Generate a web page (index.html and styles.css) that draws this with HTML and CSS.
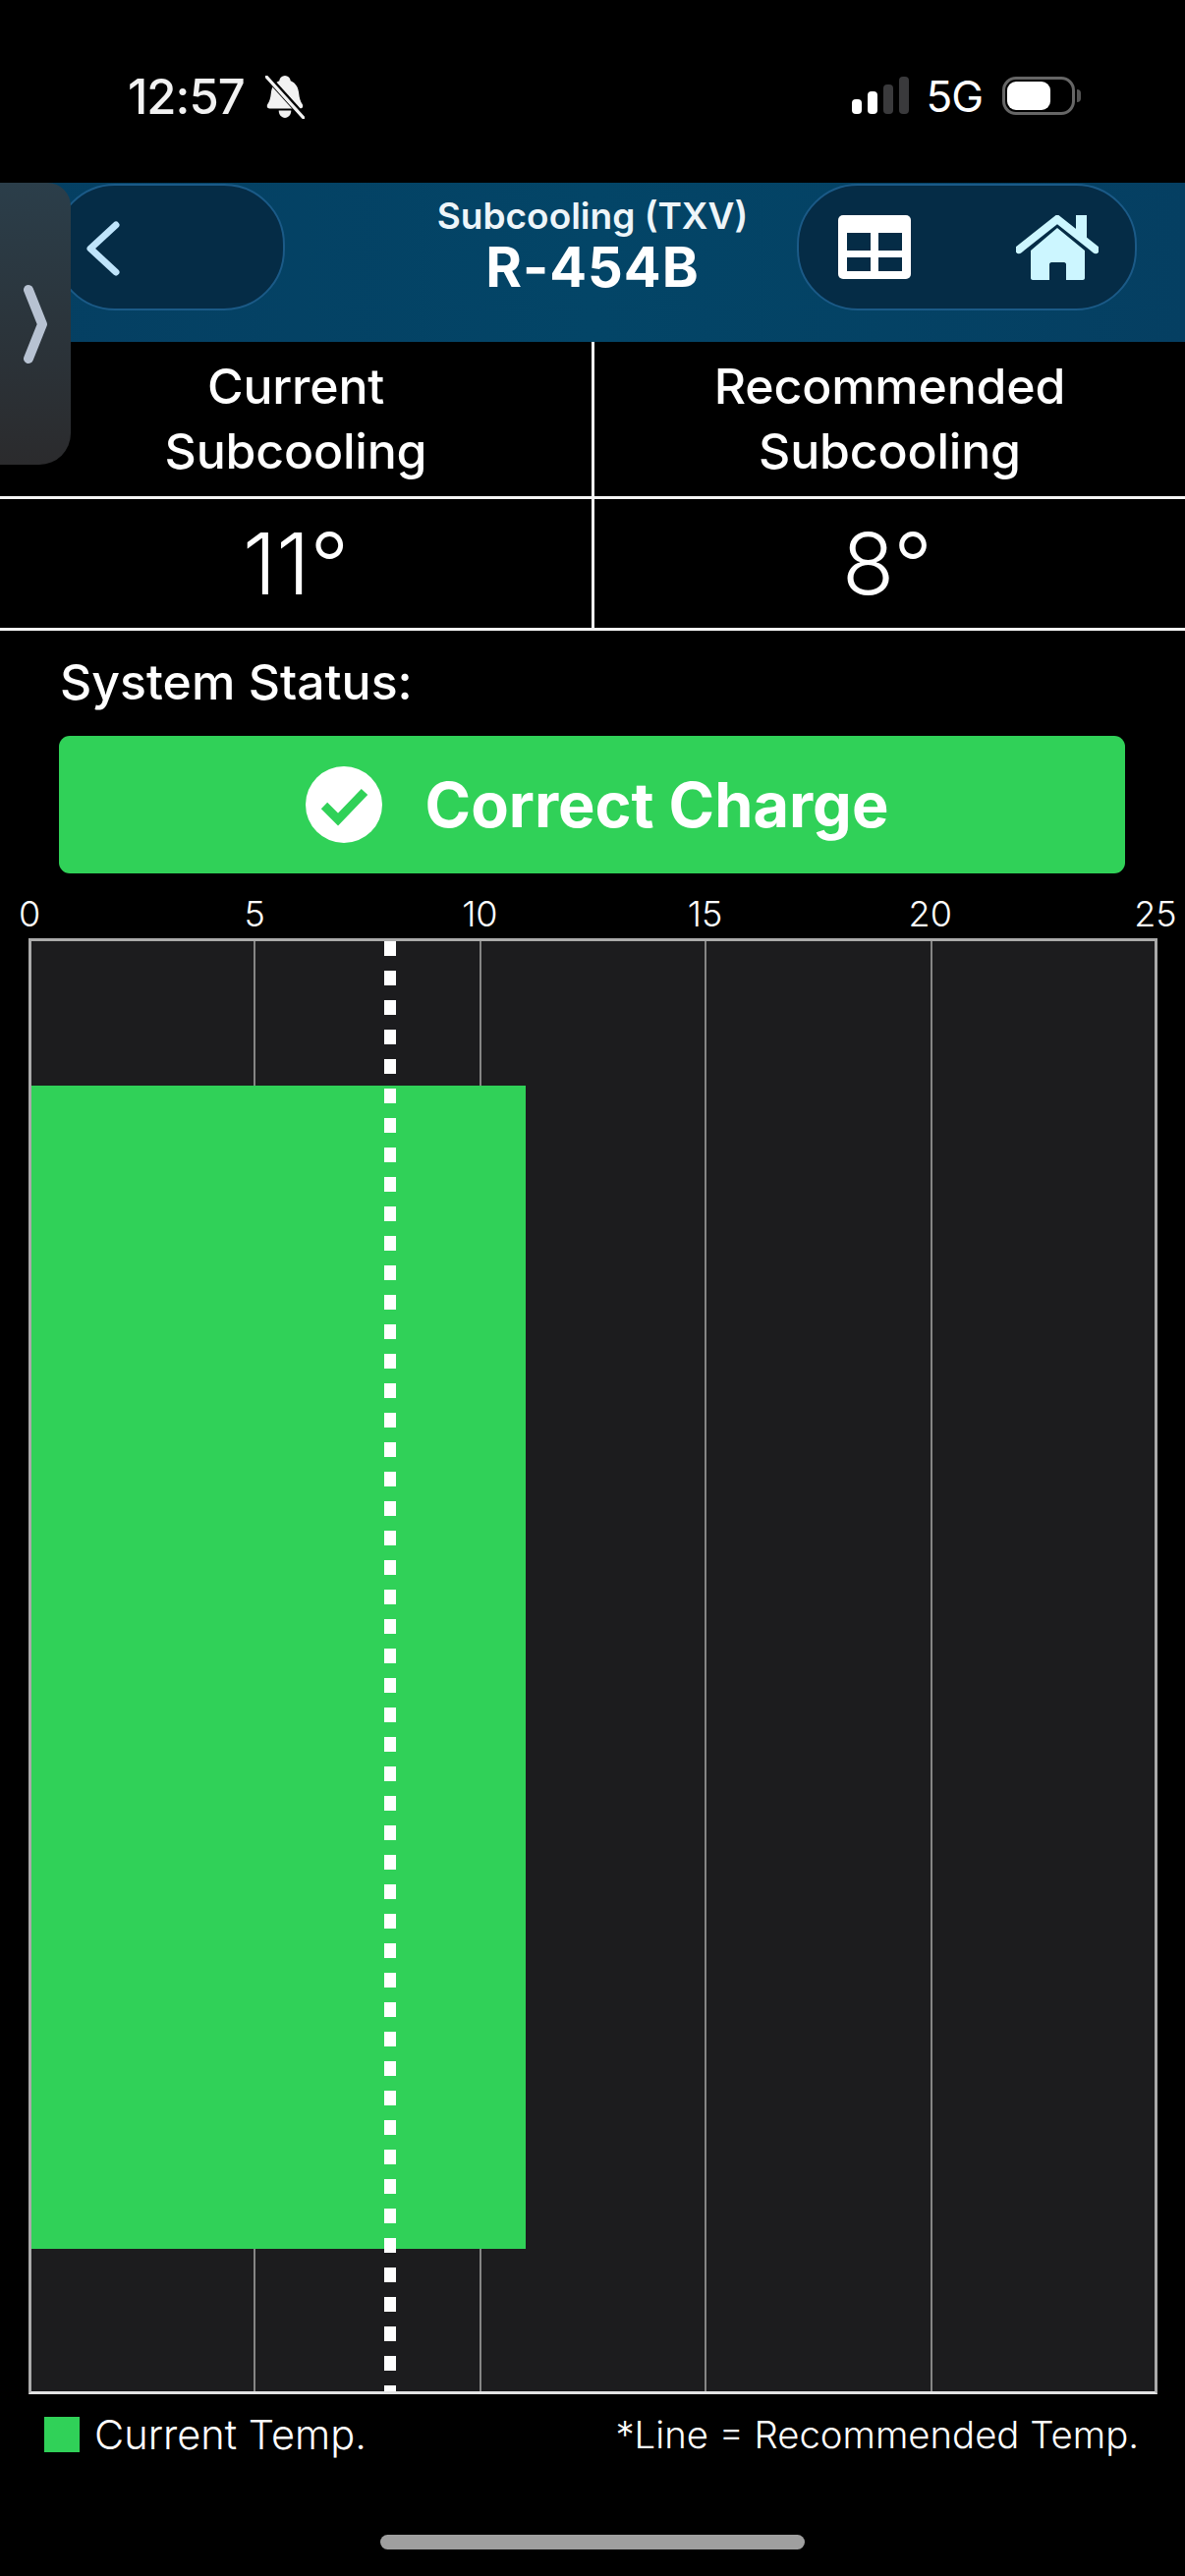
FILE: index.html
```html
<!DOCTYPE html>
<html>
<head>
    <title>Subcooling (TXV)</title>
    <meta name="viewport" content="width=device-width, initial-scale=1.0">
    <link rel="stylesheet" href="styles.css">
</head>
<body>
    <div class="status-bar">
        <div class="status-left">
            <span class="clock">12:57</span>
            <svg class="bell" width="40" height="44" viewBox="0 0 38 42">
                <path d="M19 0c3 0 5 2 5.500 5 5 2 7.500 6.500 8 12 .5 5 1.500 8 3.500 11 1 2 0 4-2 4H4c-2 0-3-2-2-4 2-3 3-6 3.500-11 .5-5.500 3-10 8-12C14 2 16 0 19 0z" fill="#f2f2f2"/>
                <path d="M13 34h12c0 4-2.500 7-6 7s-6-3-6-7z" fill="#f2f2f2"/>
                <path d="M1 0l37 41" stroke="#000" stroke-width="6"/>
                <path d="M1 1l36 40" stroke="#f2f2f2" stroke-width="3" stroke-linecap="round"/>
            </svg>
        </div>
        <div class="status-right">
            <div class="signal">
                <i class="sig s1"></i>
                <i class="sig s2"></i>
                <i class="sig s3 off"></i>
                <i class="sig s4 off"></i>
            </div>
            <span class="network">5G</span>
            <div class="battery"><div class="battery-level"></div></div>
            <div class="battery-cap"></div>
        </div>
    </div>

    <div class="header">
        <div class="pill pill-back">
            <svg width="34" height="56" viewBox="0 0 34 56">
                <path d="M30 4L4 28l26 24" fill="none" stroke="#bfe4fb" stroke-width="7" stroke-linecap="round" stroke-linejoin="round"/>
            </svg>
        </div>
        <div class="title">
            <div class="title-sub">Subcooling (TXV)</div>
            <div class="title-main">R-454B</div>
        </div>
        <div class="pill pill-actions">
            <svg width="74" height="65" viewBox="0 0 74 65">
                <rect width="74" height="65" rx="5" fill="#fff"/>
                <rect x="9" y="18" width="24" height="18" fill="#052c46"/>
                <rect x="41" y="18" width="24" height="18" fill="#052c46"/>
                <rect x="9" y="43" width="24" height="14" fill="#052c46"/>
                <rect x="41" y="43" width="24" height="14" fill="#052c46"/>
            </svg>
            <svg width="84" height="66" viewBox="0 0 84 66">
                <path d="M61 0h11v24H61z" fill="#ccf6ff"/>
                <path d="M3 35L42 4l39 31" fill="none" stroke="#ccf6ff" stroke-width="8" stroke-linecap="round"/>
                <path d="M42 13l28 23v28c0 1-1 2-2 2H51V50c0-1-1-2-2-2H36c-1 0-2 1-2 2v16H17c-1 0-2-1-2-2V36z" fill="#ccf6ff"/>
            </svg>
        </div>
        <div class="side-tab">
            <svg width="26" height="82" viewBox="0 0 26 82">
                <path d="M6 6l14 35L6 76" fill="none" stroke="#b7c2d2" stroke-width="10" stroke-linecap="round" stroke-linejoin="round"/>
            </svg>
        </div>
    </div>

    <div class="readings">
        <div class="cell cell-label divider">Current<br>Subcooling</div>
        <div class="cell cell-label">Recommended<br>Subcooling</div>
        <div class="cell cell-value divider">11°</div>
        <div class="cell cell-value value-right">8°</div>
    </div>

    <div class="status-label">System Status:</div>
    <div class="status-card">
        <svg width="78" height="78" viewBox="0 0 78 78">
            <circle cx="39" cy="39" r="39" fill="#fff"/>
            <path d="M19 40l14 14 27-28" fill="none" stroke="#30d158" stroke-width="9"/>
        </svg>
        <span>Correct Charge</span>
    </div>

    <div class="axis">
        <span class="tick"><b>0</b></span>
        <span class="tick"><b>5</b></span>
        <span class="tick"><b>10</b></span>
        <span class="tick"><b>15</b></span>
        <span class="tick"><b>20</b></span>
        <span class="tick"><b>25</b></span>
    </div>
    <div class="chart">
        <div class="gridline"></div>
        <div class="gridline"></div>
        <div class="gridline"></div>
        <div class="gridline"></div>
        <div class="gridline"></div>
        <div class="bar" style="width: 44%"></div>
        <div class="target-line" style="left: 32%"></div>
    </div>

    <div class="legend">
        <div class="legend-item"><span class="swatch"></span>Current Temp.</div>
        <div class="legend-note">*Line = Recommended Temp.</div>
    </div>

    <div class="home-indicator"></div>
</body>
</html>
```

FILE: styles.css
```css
* {
    box-sizing: border-box;
}
body {
    margin: 0;
    width: 1206px;
    height: 2622px;
    overflow: hidden;
    background: #000;
    color: #fff;
    font-family: Inter, "Noto Sans", sans-serif;
}

/* status bar */
.status-bar {
    height: 186px;
    display: flex;
    justify-content: space-between;
    align-items: flex-start;
    padding: 0 106px 0 130px;
}
.status-left {
    display: flex;
    align-items: flex-start;
    gap: 21px;
    padding-top: 69px;
}
.clock {
    font-size: 49px;
    line-height: 60px;
    font-weight: 500;
    color: #f2f2f2;
    letter-spacing: -1px;
}
.bell {
    margin-top: 8px;
}
.status-right {
    display: flex;
    align-items: flex-start;
    padding-top: 78px;
}
.signal {
    display: flex;
    align-items: flex-end;
    gap: 6px;
    height: 38px;
}
.sig {
    width: 10px;
    border-radius: 4px;
    background: #fff;
}
.sig.off {
    background: #3a3a3c;
}
.s1 { height: 15px; }
.s2 { height: 23px; }
.s3 { height: 30px; }
.s4 { height: 38px; }
.network {
    margin-left: 17px;
    font-size: 44px;
    line-height: 42px;
    margin-top: -1px;
    letter-spacing: -1px;
}
.battery {
    margin-left: 20px;
    width: 74px;
    height: 39px;
    border: 3px solid #666;
    border-radius: 14px;
    padding: 2px;
}
.battery-level {
    width: 44px;
    height: 29px;
    border-radius: 9px;
    background: #fff;
}
.battery-cap {
    width: 4px;
    height: 13px;
    margin: 13px 0 0 2px;
    background: #555;
    border-radius: 0 4px 4px 0;
}

/* blue nav header */
.header {
    position: relative;
    height: 162px;
    display: grid;
    grid-template-columns: 1fr auto 1fr;
    align-items: start;
    padding: 1px 49px 0;
    background: linear-gradient(90deg, #053f62, #034567 50%, #053f62);
}
.pill {
    height: 129px;
    border-radius: 62px;
    background: #052c46;
    border: 2px solid #1b5a87;
    display: flex;
    align-items: center;
}
.pill-back {
    width: 235px;
    margin-left: 6px;
    padding: 3px 0 0 31px;
    justify-self: start;
}
.pill-actions {
    width: 346px;
    justify-self: end;
    justify-content: space-between;
    padding: 0 37px 0 40px;
}
.title {
    text-align: center;
    padding-top: 11px;
}
.title-sub {
    font-size: 37px;
    line-height: 44px;
    font-weight: 600;
    color: #eef5f9;
}
.title-main {
    font-size: 56px;
    line-height: 60px;
    font-weight: 700;
    letter-spacing: 1px;
}
.side-tab {
    position: absolute;
    left: 0;
    top: 0;
    width: 72px;
    height: 287px;
    padding: 103px 0 0 23px;
    border-radius: 0 0 32px 0;
    border-top-right-radius: 24px;
    background: linear-gradient(180deg, #2b3e4a, #2b2b2d);
}

/* reading table */
.readings {
    display: grid;
    grid-template-columns: 605px 1fr;
    grid-template-rows: 160px 134px;
}
.cell {
    display: flex;
    align-items: center;
    justify-content: center;
    text-align: center;
    border-bottom: 3px solid #f5f5f5;
}
.divider {
    border-right: 3px solid #f5f5f5;
}
.cell-label {
    font-size: 50px;
    line-height: 66px;
    font-weight: 500;
    letter-spacing: -0.2px;
    padding-bottom: 2px;
}
.cell-value {
    font-size: 87px;
    font-weight: 300;
    line-height: 100px;
}
.value-right {
    padding-right: 5px;
}

.status-label {
    margin: 19px 0 0 61px;
    font-size: 50px;
    line-height: 66px;
    font-weight: 500;
}
.status-card {
    height: 140px;
    margin: 22px 61px 0 60px;
    padding-left: 10px;
    display: flex;
    align-items: center;
    justify-content: center;
    gap: 44px;
    border-radius: 11px;
    background: #30d158;
    font-size: 63px;
    font-weight: 700;
}

/* chart */
.axis {
    display: flex;
    justify-content: space-between;
    margin: 19px 30px 0 30px;
    height: 47px;
}
.tick {
    width: 0;
    display: flex;
    justify-content: center;
}
.tick b {
    font-size: 36px;
    line-height: 44px;
    font-weight: 300;
}
.chart {
    position: relative;
    display: flex;
    height: 1482px;
    margin: 0 28px 0 29px;
    border: 3px solid #aaa;
    border-bottom-color: #e4e4e4;
    background: #1c1c1e;
}
.gridline {
    flex: 1;
    border-right: 2px solid #858585;
}
.gridline:first-child {
    margin-left: -2px;
}
.gridline:nth-child(5) {
    margin-right: -2px;
    border-right: none;
}
.bar {
    position: absolute;
    left: 0;
    top: 147px;
    height: 1184px;
    background: #30d158;
}
.target-line {
    position: absolute;
    top: 0;
    bottom: 0;
    width: 12px;
    margin-left: -7px;
    background: repeating-linear-gradient(180deg, #fff 0, #fff 15px, transparent 15px, transparent 30px);
}

.legend {
    display: flex;
    justify-content: space-between;
    align-items: center;
    margin: 18px 47px 0 45px;
    font-size: 38.300px;
    line-height: 46px;
    font-weight: 300;
}
.legend-item {
    display: flex;
    align-items: center;
    gap: 15px;
    font-size: 41.500px;
}
.swatch {
    width: 36px;
    height: 36px;
    background: #30d158;
}
.home-indicator {
    width: 432px;
    height: 15px;
    margin: 79px auto 0;
    border-radius: 8px;
    background: #9f9f9f;
}
```
